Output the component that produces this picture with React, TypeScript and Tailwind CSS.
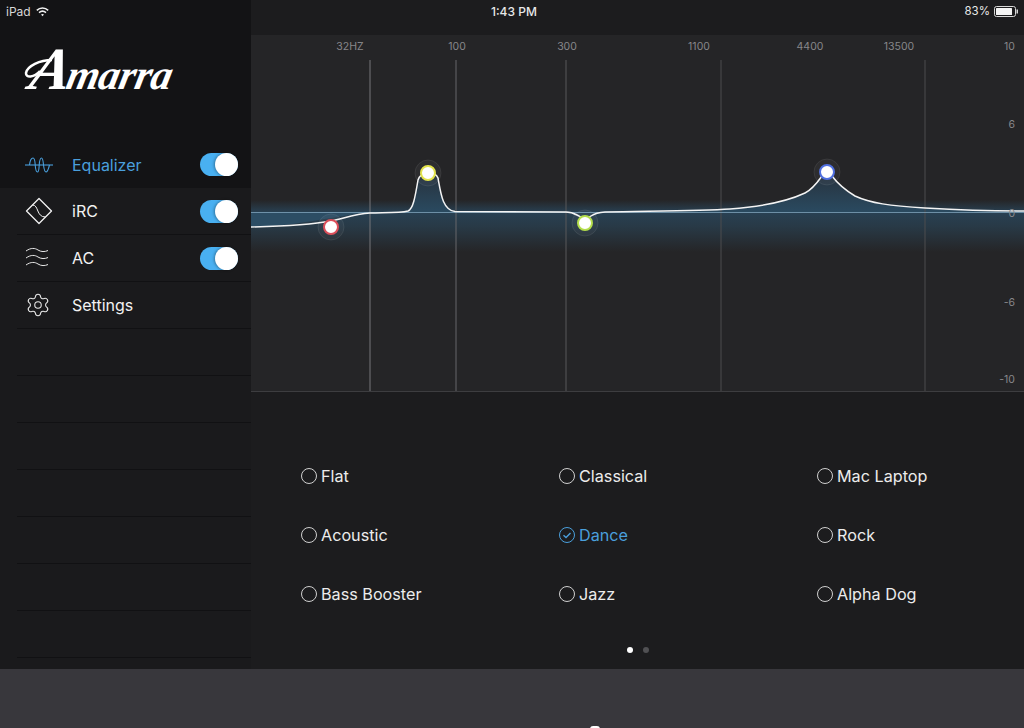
import { Settings } from 'lucide-react';

const sans = 'font-["Inter","Liberation_Sans",sans-serif]';

const freqLabels = [
  { x: 350, text: '32HZ' },
  { x: 457, text: '100' },
  { x: 567, text: '300' },
  { x: 699, text: '1100' },
  { x: 810, text: '4400' },
  { x: 899, text: '13500' },
];

const gainLabels = [
  { y: 50, text: '10' },
  { y: 128, text: '6' },
  { y: 217, text: '0' },
  { y: 306, text: '-6' },
  { y: 383, text: '-10' },
];

const gridLines = [
  { x: 370, color: '#77777a' },
  { x: 456, color: '#66666a' },
  { x: 566, color: '#58585b' },
  { x: 721, color: '#4c4c4f' },
  { x: 925, color: '#4c4c4f' },
];

const nodes = [
  { x: 331, y: 227, color: '#dc4f5a' },
  { x: 428, y: 173, color: '#e3e34c' },
  { x: 585, y: 223, color: '#b4de4b' },
  { x: 827, y: 172, color: '#4f6fe0' },
];

const curve =
  'M251 227 C290 226 315 224 331 221 C345 218 355 214 370 213 C385 212.5 400 213 408 211 C413 209 415 198 418 180 C421 171 435 171 438 178 C441 195 443 210 455 211.5 L566 212 C572 212 575 214 579 216 C583 219 587 219 591 216 C594 214 598 212.5 605 212 C650 211 700 211 730 209 C770 206 790 200 805 193 C812 189.7 817 183 822 176 C825 172 829 172 832 176 C838 184 845 190 855 196 C870 203 890 206 925 208 C960 210 1000 211 1024 211';

const presets = [
  'Flat',
  'Classical',
  'Mac Laptop',
  'Acoustic',
  'Dance',
  'Rock',
  'Bass Booster',
  'Jazz',
  'Alpha Dog',
];

function Toggle() {
  return (
    <div className="flex h-[23px] w-[38px] items-center justify-end rounded-full bg-[#49b0f1]">
      <div className="h-[23px] w-[23px] rounded-full bg-white shadow-[-1px_0_3px_rgba(0,0,0,0.35)]" />
    </div>
  );
}

function EqIcon() {
  return (
    <svg width="28" height="24" viewBox="0 0 28 24" fill="none" stroke="#4a9fdc" strokeWidth="1.1">
      <path d="M0 12 H28" />
      <path d="M4.500 12 C5 8 6 5 8 5 C10 5 10 9 10.200 12 C10.500 16 11 19 12.500 19 C14 19 14 15 14.200 12 C14.500 8 15 5 16.500 5 C18 5 18.200 9 18.500 12 C19 16 19.500 19 21 19 C22.500 19 23.500 16 24.500 12" />
    </svg>
  );
}

function IrcIcon() {
  return (
    <svg width="28" height="28" viewBox="0 0 28 28" fill="none" stroke="#f2f2f2" strokeWidth="1.3" strokeLinejoin="round">
      <path d="M14 1.500 L26.500 14 L14 26.500 L1.500 14 Z" />
      <path d="M7.500 8 C14 8 11 20 20.500 20" strokeWidth="1" />
    </svg>
  );
}

function AcIcon() {
  return (
    <svg width="24" height="22" viewBox="0 0 24 22" fill="none" stroke="#e8e8e8" strokeWidth="1">
      <path d="M1 4 C6 0.500 10 1 13 3 C16 5 20 5 23 3.500" />
      <path d="M1 11 C6 7.500 10 8 13 10 C16 12 20 12 23 10.500" />
      <path d="M1 18 C6 14.500 10 15 13 17 C16 19 20 19 23 17.500" />
    </svg>
  );
}

function MenuRow({
  icon,
  label,
  toggle,
  active,
}: {
  icon: React.ReactNode;
  label: string;
  toggle?: boolean;
  active?: boolean;
}) {
  return (
    <div className={active ? 'h-[47px] bg-[#131315]' : 'ml-[17px] h-[47px] border-b border-[#111113]'}>
      <div className={active ? 'flex h-full items-center pl-[25px] pr-[13px]' : 'flex h-full items-center pl-[8px] pr-[13px]'}>
        <div className="flex w-[47px] items-center">{icon}</div>
        <span className={active ? 'flex-1 text-[16px] text-[#4a9fdc]' : 'flex-1 text-[16px] text-[#f2f2f2]'}>{label}</span>
        {toggle && <Toggle />}
      </div>
    </div>
  );
}

function Logo() {
  return (
    <div className="relative pl-[31px] pt-[18px]">
      <svg width="30" height="22" viewBox="0 0 30 22" fill="none" stroke="#ffffff" strokeWidth="2.500" className="absolute left-[24px] top-[37px]">
        <path d="M28 2 C16 2 3 8 2 15 C1.500 20 10 20 16 13" />
      </svg>
      <div className='flex -skew-x-12 items-baseline font-["Liberation_Serif",serif] font-bold italic leading-[60px] text-white'>
        <span className="text-[60px] tracking-[-3px]">A</span>
        <span className="text-[42px] tracking-[-0.5px]">marra</span>
      </div>
    </div>
  );
}

function Sidebar() {
  return (
    <aside className="flex w-[251px] shrink-0 flex-col bg-[#1a1a1c]">
      <div className="h-[141px] bg-[#131315]">
        <div className="flex items-center gap-[5px] pl-[6px] pt-[3px] text-[12px] text-[#d8d8d8]">
          iPad
          <svg width="13" height="10" viewBox="0 0 13 10" fill="none" stroke="#f0f0f0" strokeWidth="1.500">
            <path d="M0.800 3.400 C4 0.300 9 0.300 12.200 3.400" />
            <path d="M3 5.600 C5 3.900 8 3.900 10 5.600" />
            <path d="M5 7.600 C6 6.900 7 6.900 8 7.600 L6.500 9.200 Z" fill="#f0f0f0" stroke="none" />
          </svg>
        </div>
        <Logo />
      </div>
      <MenuRow active icon={<EqIcon />} label="Equalizer" toggle />
      <MenuRow icon={<IrcIcon />} label="iRC" toggle />
      <MenuRow icon={<AcIcon />} label="AC" toggle />
      <MenuRow icon={<Settings size={26} strokeWidth={1} color="#e8e8e8" />} label="Settings" />
      {Array.from({ length: 7 }).map((_, i) => (
        <div key={i} className="ml-[17px] h-[47px] border-b border-[#111113]" />
      ))}
    </aside>
  );
}

function StatusBar() {
  return (
    <div className="flex h-[35px] items-start justify-between bg-[#1c1c1e] pl-[240px] pr-[5px] pt-[3px] text-[12px] text-[#e8e8e8]">
      <div className="font-medium">1:43 PM</div>
      <div className="flex items-center gap-[4px] text-[11.500px]">
        83%
        <svg width="25" height="11" viewBox="0 0 25 11">
          <rect x="0.500" y="0.500" width="21" height="10" rx="2" fill="none" stroke="#d8d8d8" />
          <rect x="2" y="2" width="16" height="7" rx="0.500" fill="#f4f4f4" />
          <rect x="22.500" y="3.500" width="1.500" height="4" fill="#d8d8d8" />
        </svg>
      </div>
    </div>
  );
}

function EqChart() {
  return (
    <div className="h-[357px] border-b border-[#3d3d40] bg-[#252527]">
      <svg width="773" height="356" viewBox="251 35 773 356" className="block">
        <defs>
          <linearGradient id="band" x1="0" y1="200" x2="0" y2="252" gradientUnits="userSpaceOnUse">
            <stop offset="0" stopColor="#2a4d66" stopOpacity="0" />
            <stop offset="0.24" stopColor="#2a4d66" stopOpacity="0.7" />
            <stop offset="0.5" stopColor="#2a4558" stopOpacity="0.65" />
            <stop offset="1" stopColor="#2a4558" stopOpacity="0" />
          </linearGradient>
          <linearGradient id="peak" x1="0" y1="172" x2="0" y2="212" gradientUnits="userSpaceOnUse">
            <stop offset="0" stopColor="#27313c" />
            <stop offset="1" stopColor="#2a4a60" />
          </linearGradient>
          <clipPath id="aboveBase">
            <rect x="251" y="35" width="773" height="177" />
          </clipPath>
        </defs>
        <rect x="251" y="200" width="773" height="52" fill="url(#band)" />
        <path d={`${curve} L1024 212 L251 212 Z`} fill="url(#peak)" clipPath="url(#aboveBase)" />
        <path d="M251 212 H370 C340 215 300 226 251 227 Z" fill="#2c4d64" />
        {gridLines.map((line) => (
          <line key={line.x} x1={line.x} y1="60" x2={line.x} y2="391" stroke={line.color} strokeWidth="1" />
        ))}
        <line x1="251" y1="212.500" x2="1024" y2="212.500" stroke="#7fa3bb" strokeWidth="0.800" />
        <path d={curve} fill="none" stroke="#f4f4f4" strokeWidth="1.500" />
        {nodes.map((node) => (
          <g key={node.x}>
            <circle cx={node.x} cy={node.y} r="13" fill="#ffffff" fillOpacity="0.04" stroke="#ffffff" strokeOpacity="0.08" />
            <circle cx={node.x} cy={node.y} r="7" fill="#ffffff" stroke={node.color} strokeWidth="2" />
          </g>
        ))}
        {freqLabels.map((label) => (
          <text key={label.text} x={label.x} y="50" textAnchor="middle" fontSize="10.500" fill="#87878a" fontFamily="Inter, sans-serif">
            {label.text}
          </text>
        ))}
        {gainLabels.map((label) => (
          <text key={label.text} x="1015" y={label.y} textAnchor="end" fontSize="10.500" fill="#87878a" fontFamily="Inter, sans-serif">
            {label.text}
          </text>
        ))}
      </svg>
    </div>
  );
}

function Preset({ name }: { name: string }) {
  const selected = name === 'Dance';
  return (
    <div className={selected ? 'flex items-center gap-[4px] text-[#4a9fdc]' : 'flex items-center gap-[4px] text-[#ececec]'}>
      <svg width="16" height="16" viewBox="0 0 16 16" fill="none" stroke="currentColor" strokeWidth="1">
        <circle cx="8" cy="8" r="7.500" stroke={selected ? 'currentColor' : '#d0d0d0'} />
        {selected && <path d="M4.500 8.300 L7 10.500 L11.500 6" strokeWidth="1.400" />}
      </svg>
      <span className="text-[16.200px]">{name}</span>
    </div>
  );
}

function Presets() {
  return (
    <div className="flex flex-1 flex-col items-stretch bg-[#1c1c1e]">
      <div className="grid grid-cols-[258px_258px_1fr] auto-rows-[59px] items-center pl-[50px] pt-[55px]">
        {presets.map((name) => (
          <Preset key={name} name={name} />
        ))}
      </div>
      <div className="flex justify-center gap-[10px] pt-[23px]">
        <div className="h-[6px] w-[6px] rounded-full bg-white" />
        <div className="h-[6px] w-[6px] rounded-full bg-[#505053]" />
      </div>
    </div>
  );
}

export default function App() {
  return (
    <div className={`flex h-[728px] w-[1024px] flex-col overflow-hidden ${sans}`}>
      <div className="flex h-[669px]">
        <Sidebar />
        <main className="flex flex-1 flex-col">
          <StatusBar />
          <EqChart />
          <Presets />
        </main>
      </div>
      <div className="h-[59px] bg-[#38373c] pl-[590px] pt-[57px]">
        <div className="h-[4px] w-[10px] rounded-t-[3px] bg-white" />
      </div>
    </div>
  );
}
